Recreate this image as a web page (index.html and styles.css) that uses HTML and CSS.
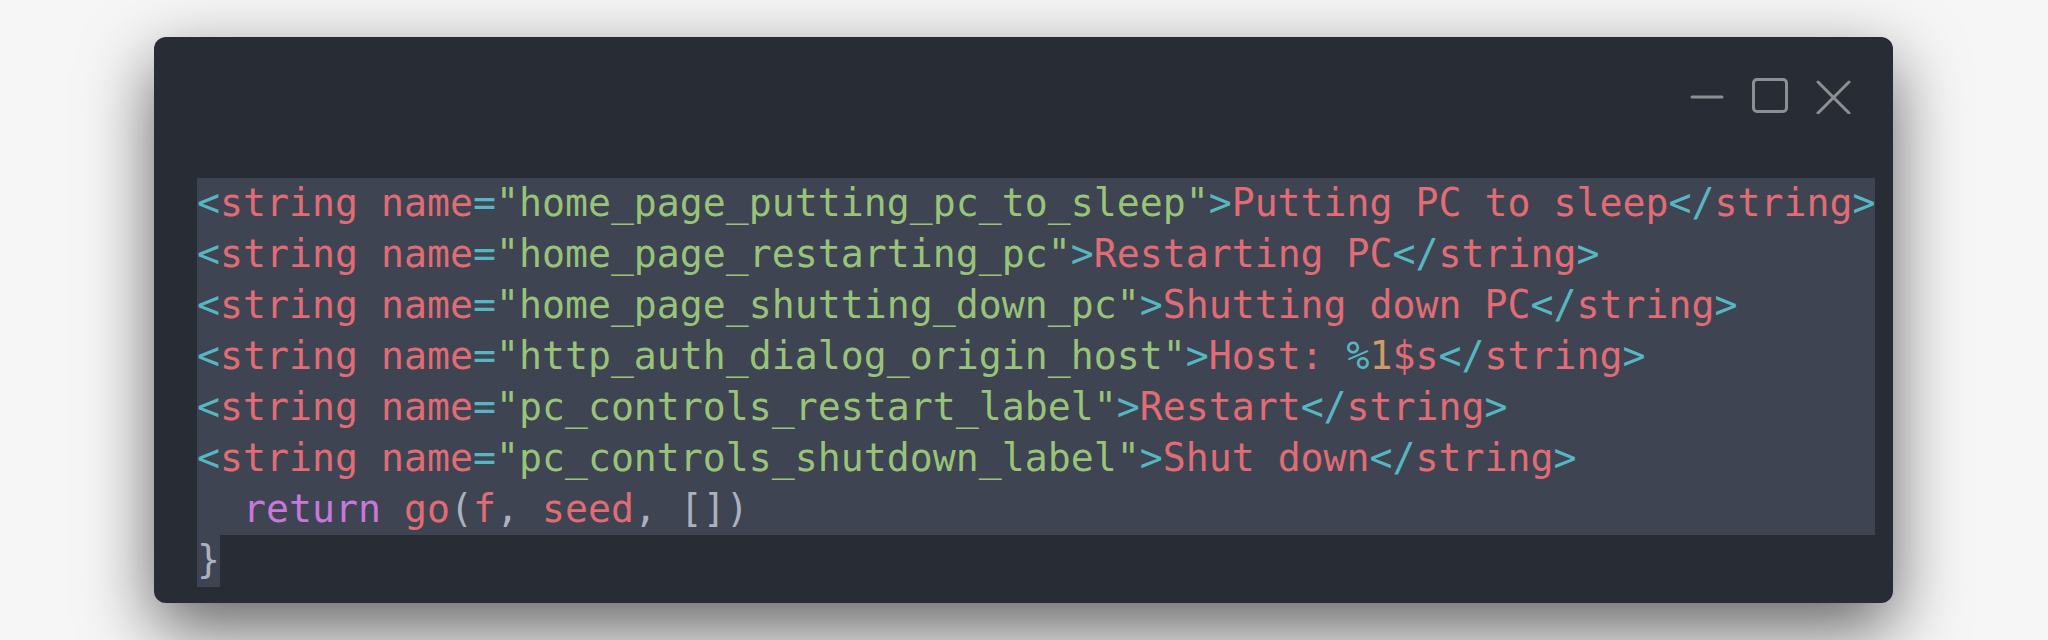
FILE: index.html
```html
<!DOCTYPE html>
<html>
<head>
<meta charset="utf-8">
<link rel="stylesheet" href="styles.css">
</head>
<body>
<div class="window">
  <div class="titlebar">
    <svg class="ctl" width="36" height="36" viewBox="0 0 36 36"><line x1="3" y1="19" x2="33" y2="19"/></svg>
    <svg class="ctl max" width="36" height="36" viewBox="0 0 36 36"><rect x="1.5" y="1.5" width="33" height="32" rx="3.5" ry="3.5"/></svg>
    <svg class="ctl" width="36" height="36" viewBox="0 0 36 36"><line x1="3" y1="4" x2="34" y2="35"/><line x1="34" y1="4" x2="3" y2="35"/></svg>
  </div>
  <div class="code">
    <div class="sel">
      <div class="ln"><span class="c">&lt;</span><span class="r">string</span> <span class="r">name</span><span class="c">=</span><span class="g">"home_page_putting_pc_to_sleep"</span><span class="c">&gt;</span><span class="r">Putting PC to sleep</span><span class="c">&lt;/</span><span class="r">string</span><span class="c">&gt;</span></div>
      <div class="ln"><span class="c">&lt;</span><span class="r">string</span> <span class="r">name</span><span class="c">=</span><span class="g">"home_page_restarting_pc"</span><span class="c">&gt;</span><span class="r">Restarting PC</span><span class="c">&lt;/</span><span class="r">string</span><span class="c">&gt;</span></div>
      <div class="ln"><span class="c">&lt;</span><span class="r">string</span> <span class="r">name</span><span class="c">=</span><span class="g">"home_page_shutting_down_pc"</span><span class="c">&gt;</span><span class="r">Shutting down PC</span><span class="c">&lt;/</span><span class="r">string</span><span class="c">&gt;</span></div>
      <div class="ln"><span class="c">&lt;</span><span class="r">string</span> <span class="r">name</span><span class="c">=</span><span class="g">"http_auth_dialog_origin_host"</span><span class="c">&gt;</span><span class="r">Host: </span><span class="c">%</span><span class="o">1</span><span class="r">$s</span><span class="c">&lt;/</span><span class="r">string</span><span class="c">&gt;</span></div>
      <div class="ln"><span class="c">&lt;</span><span class="r">string</span> <span class="r">name</span><span class="c">=</span><span class="g">"pc_controls_restart_label"</span><span class="c">&gt;</span><span class="r">Restart</span><span class="c">&lt;/</span><span class="r">string</span><span class="c">&gt;</span></div>
      <div class="ln"><span class="c">&lt;</span><span class="r">string</span> <span class="r">name</span><span class="c">=</span><span class="g">"pc_controls_shutdown_label"</span><span class="c">&gt;</span><span class="r">Shut down</span><span class="c">&lt;/</span><span class="r">string</span><span class="c">&gt;</span></div>
      <div class="ln">  <span class="p">return</span> <span class="r">go</span><span class="w">(</span><span class="r">f</span><span class="w">, </span><span class="r">seed</span><span class="w">, [])</span></div>
    </div>
    <div class="ln last"><span class="sel-inline w">}</span></div>
  </div>
</div>
</body>
</html>
```
FILE: styles.css
```css
html, body {
  margin: 0;
  padding: 0;
}
body {
  background: #f6f6f6;
  padding: 37px 0 0 154px;
  height: 640px;
  box-sizing: border-box;
  overflow: hidden;
}
.window {
  width: 1739px;
  height: 566px;
  background: #282c34;
  border-radius: 12px;
  box-shadow: 0 26px 70px rgba(0, 0, 0, 0.6);
  display: flex;
  flex-direction: column;
}
.titlebar {
  flex: 0 0 118px;
  display: flex;
  justify-content: flex-end;
  align-items: center;
  padding-right: 42px;
  gap: 27px;
}
.ctl {
  fill: none;
  stroke: #8e8f92;
  stroke-width: 3;
  stroke-linecap: round;
}
.code {
  margin: 23px 0 0 43px;
  font-family: "DejaVu Sans Mono", monospace;
  font-size: 38.2px;
  line-height: 51px;
}
.sel {
  background: #3e4451;
  width: max-content;
}
.ln {
  height: 51px;
  white-space: pre;
}
.last {
  height: 52px;
}
.sel-inline {
  background: #3e4451;
  display: inline-block;
  height: 52px;
  vertical-align: top;
}
.c { color: #56b6c2; }
.r { color: #e06c75; }
.g { color: #98c379; }
.o { color: #d19a66; }
.p { color: #c678dd; }
.w { color: #abb2bf; }
```
